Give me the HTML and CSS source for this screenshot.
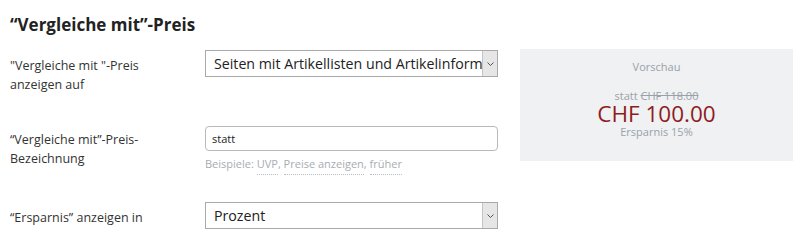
FILE: index.html
```html
<!DOCTYPE html>
<html lang="de">
<head>
  <meta charset="UTF-8" />
  <meta name="viewport" content="width=device-width, initial-scale=1.0" />
  <title>Vergleiche mit-Preis</title>
  <link rel="stylesheet" href="styles.css">
</head>
<body>
  <h2 class="title">“Vergleiche mit”-Preis</h2>

  <div class="layout">
    <div class="form">
      <div class="row row-first">
        <label class="label">"Vergleiche mit "-Preis anzeigen auf</label>
        <div class="control">
          <div class="select">
            <span class="select-text">Seiten mit Artikellisten und Artikelinform</span>
            <span class="select-arrow">
              <svg width="7" height="4" viewBox="0 0 7 4"><path d="M0.5 0.5 L3.5 3.5 L6.5 0.5" fill="none" stroke="#555" stroke-width="1"/></svg>
            </span>
          </div>
        </div>
      </div>

      <div class="row row-second">
        <label class="label">“Vergleiche mit”-Preis-Bezeichnung</label>
        <div class="control">
          <input class="text-input" type="text" value="statt">
          <div class="hint">Beispiele: <span class="hint-link">UVP</span>, <span class="hint-link">Preise anzeigen</span>, <span class="hint-link">früher</span></div>
        </div>
      </div>

      <div class="row row-third">
        <label class="label">“Ersparnis” anzeigen in</label>
        <div class="control">
          <div class="select">
            <span class="select-text">Prozent</span>
            <span class="select-arrow">
              <svg width="7" height="4" viewBox="0 0 7 4"><path d="M0.5 0.5 L3.5 3.5 L6.5 0.5" fill="none" stroke="#555" stroke-width="1"/></svg>
            </span>
          </div>
        </div>
      </div>
    </div>

    <div class="preview">
      <div class="preview-title">Vorschau</div>
      <div class="preview-old">statt <s>CHF 118.00</s></div>
      <div class="preview-price">CHF 100.00</div>
      <div class="preview-saving">Ersparnis 15%</div>
    </div>
  </div>
</body>
</html>
```

FILE: styles.css
```css
* {
  margin: 0;
  padding: 0;
  box-sizing: border-box;
}

body {
  font-family: 'Open Sans', sans-serif;
  background: #fff;
  color: #333;
  padding: 13px 10px 0;
  font-size: 12px;
}

.title {
  font-size: 17px;
  font-weight: 700;
  color: #222;
  line-height: 24px;
}

.layout {
  display: flex;
  align-items: flex-start;
  gap: 22px;
  margin-top: 13px;
}

.form {
  width: 488px;
}

.row {
  display: flex;
}

.row-second {
  margin-top: 32px;
}

.row-third {
  margin-top: 29px;
}

.label {
  width: 195px;
  font-size: 12.5px;
  line-height: 19px;
  color: #333;
  padding-top: 6px;
  padding-right: 40px;
}

.row-second .label {
  padding-top: 4px;
}

.row-third .label {
  padding-top: 6px;
}

.control {
  width: 293px;
}

.select {
  display: flex;
  height: 27px;
  border: 1px solid #a9a9a9;
  background: #fff;
}

.select-text {
  flex: 1;
  overflow: hidden;
  white-space: nowrap;
  font-size: 14.2px;
  line-height: 25px;
  padding-left: 8px;
  color: #222;
}

.select-arrow {
  width: 15px;
  background: #e6e6e6;
  border-left: 1px solid #c4c4c4;
  display: flex;
  align-items: center;
  justify-content: center;
}

.text-input {
  display: block;
  width: 100%;
  height: 25px;
  border: 1px solid #b9b9b9;
  border-radius: 4px;
  padding: 0 6px;
  font-family: 'Open Sans', sans-serif;
  font-size: 11px;
  color: #222;
  outline: none;
}

.hint {
  margin-top: 4px;
  font-size: 11px;
  line-height: 18px;
  color: #a6adb4;
}

.hint-link {
  border-bottom: 1px dotted #b8bec4;
  padding-bottom: 3px;
}

.preview {
  width: 275px;
  height: 112px;
  margin-top: -1px;
  background: #eff1f3;
  text-align: center;
  padding-top: 9px;
  color: #9aa1a8;
}

.preview-title {
  font-size: 11px;
  line-height: 18px;
}

.preview-old {
  margin-top: 13px;
  font-size: 11px;
  line-height: 14px;
}

.preview-price {
  font-size: 22.5px;
  line-height: 22px;
  color: #8f1c1c;
}

.preview-saving {
  font-size: 11px;
  line-height: 14px;
}
```
